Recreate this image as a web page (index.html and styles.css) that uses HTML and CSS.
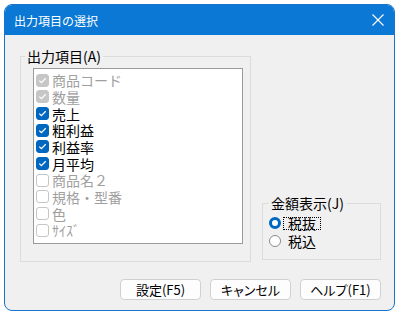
FILE: index.html
```html
<!DOCTYPE html>
<html lang="ja">
<head>
	<meta charset="UTF-8">
	<title>出力項目の選択</title>
	<link rel="stylesheet" href="styles.css">
</head>
<body>
	<div class="dialog">
		<div class="title-bar">
			<span class="title">出力項目の選択</span>
			<svg class="close" width="12" height="12" viewBox="0 0 12 12">
				<path d="M0.5 0.5 L11.5 11.5 M11.5 0.5 L0.5 11.5" stroke="#fff" stroke-width="1.1" fill="none"/>
			</svg>
		</div>
		<div class="content">
			<div class="groups">
				<fieldset class="group items">
					<legend>出力項目(A)</legend>
					<ul class="list">
						<li class="disabled"><span class="chk on"></span>商品コード</li>
						<li class="disabled"><span class="chk on"></span>数量</li>
						<li><span class="chk on"></span>売上</li>
						<li><span class="chk on"></span>粗利益</li>
						<li><span class="chk on"></span>利益率</li>
						<li><span class="chk on"></span>月平均</li>
						<li class="disabled"><span class="chk"></span>商品名２</li>
						<li class="disabled"><span class="chk"></span>規格・型番</li>
						<li class="disabled"><span class="chk"></span>色</li>
						<li class="disabled"><span class="chk"></span>ｻｲｽﾞ</li>
					</ul>
				</fieldset>
				<fieldset class="group tax">
					<legend>金額表示(J)</legend>
					<div class="radio-row"><span class="radio on"></span><span class="radio-label focus">税抜</span></div>
					<div class="radio-row"><span class="radio"></span><span class="radio-label">税込</span></div>
				</fieldset>
			</div>
			<div class="buttons">
				<button class="btn">設定(F5)</button>
				<button class="btn">キャンセル</button>
				<button class="btn">ヘルプ(F1)</button>
			</div>
		</div>
	</div>
</body>
</html>
```

FILE: styles.css
```css
html,body,div,ul,li,span,fieldset,legend,button {
	margin: 0;
	padding: 0;
}
body {
	background: #fff;
	font-family: "Noto Sans CJK JP", "Noto Sans", sans-serif;
}
li {
	list-style: none;
}
.dialog {
	width: 391px;
	height: 307px;
	margin: 4px;
	box-sizing: border-box;
	border: 1px solid #1a73d0;
	border-radius: 8px;
	overflow: hidden;
	background: #f0f0f0;
}
.title-bar {
	height: 30px;
	background: #0a78d4;
	display: flex;
	align-items: center;
	justify-content: space-between;
	padding: 2px 10px 0 9px;
	box-sizing: border-box;
}
.title {
	color: #fff;
	font-size: 12px;
	line-height: 16px;
}
.close {
	margin-top: -3px;
}
.content {
	padding: 13px 13px 0 15px;
}
.groups {
	display: flex;
	align-items: flex-end;
	gap: 11px;
}
.group {
	border: 1px solid #dcdcdc;
}
.group legend {
	font-size: 14px;
	line-height: 16px;
	padding: 0 2px;
	color: #000;
}
.items {
	width: 231px;
	box-sizing: border-box;
	padding: 4px 7px 17px 12px;
}
.items legend {
	margin-left: -8px;
}
.list {
	height: 176px;
	box-sizing: border-box;
	border: 1px solid #9a9a9a;
	background: #fff;
	padding: 3px 0 0 2px;
}
.list li {
	height: 16.67px;
	display: flex;
	align-items: center;
	font-size: 14px;
	line-height: 16px;
	color: #000;
}
.list li.disabled {
	color: #a0a0a0;
}
.chk {
	width: 13px;
	height: 13px;
	box-sizing: border-box;
	border: 1px solid #c6c6c6;
	border-radius: 3px;
	background: #fff;
	margin-right: 3px;
	flex: none;
}
.chk.on {
	border-color: #0067c0;
	background: #0067c0 url("data:image/svg+xml,%3Csvg xmlns='http://www.w3.org/2000/svg' width='11' height='11' viewBox='0 0 11 11'%3E%3Cpath d='M2.3 5.6 L4.4 7.7 L8.7 3.3' stroke='white' stroke-width='1.3' fill='none'/%3E%3C/svg%3E") center no-repeat;
}
.disabled .chk.on {
	border-color: #c6c6c6;
	background-color: #c6c6c6;
}
.tax {
	width: 119px;
	box-sizing: border-box;
	padding: 3px 6px 9px 6px;
	margin-bottom: 2px;
}
.radio-row {
	height: 18px;
	display: flex;
	align-items: center;
	font-size: 14px;
	line-height: 11px;
}
.radio {
	width: 12px;
	height: 12px;
	box-sizing: border-box;
	border: 1px solid #8a8a8a;
	border-radius: 50%;
	background: #fff;
	flex: none;
}
.radio.on {
	border: 3.5px solid #0067c0;
}
.radio-label {
	margin-left: 2px;
	padding: 0 4px;
	line-height: 11px;
	border: 1px dotted transparent;
}
.radio-label.focus {
	border-color: #000;
}
.buttons {
	display: flex;
	justify-content: flex-end;
	gap: 9px;
	margin-top: 17px;
}
.btn {
	width: 81px;
	height: 21px;
	border: 1px solid #d0d0d0;
	border-radius: 4px;
	background: #fdfdfd;
	font-family: "Noto Sans CJK JP", sans-serif;
	font-size: 13px;
	line-height: 18px;
	color: #000;
	font-feature-settings: "palt";
}
```
